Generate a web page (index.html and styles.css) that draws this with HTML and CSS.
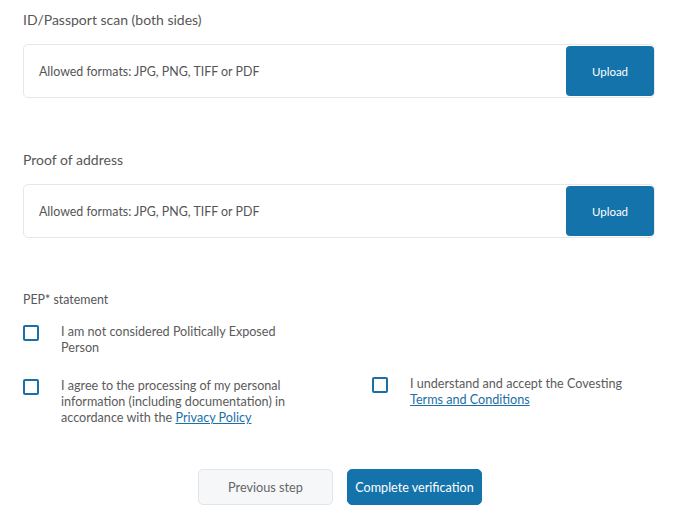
FILE: index.html
```html
<!DOCTYPE html>
<html>
<head>
<meta charset="utf-8">
<link rel="stylesheet" href="styles.css">
</head>
<body>
<div class="page">
  <section class="field">
    <div class="field-label">ID/Passport scan (both sides)</div>
    <div class="upload-box">
      <span class="hint">Allowed formats: JPG, PNG, TIFF or PDF</span>
      <button class="upload-btn">Upload</button>
    </div>
  </section>
  <section class="field field-second">
    <div class="field-label">Proof of address</div>
    <div class="upload-box">
      <span class="hint">Allowed formats: JPG, PNG, TIFF or PDF</span>
      <button class="upload-btn">Upload</button>
    </div>
  </section>
  <section class="pep">
    <div class="pep-title">PEP* statement</div>
    <div class="checks">
      <label class="check">
        <span class="box"></span>
        <span class="check-text">I am not considered Politically Exposed Person</span>
      </label>
      <div></div>
      <label class="check">
        <span class="box"></span>
        <span class="check-text">I agree to the processing of my personal information (including documentation) in accordance with the <a href="#">Privacy Policy</a></span>
      </label>
      <label class="check check-right">
        <span class="box"></span>
        <span class="check-text">I understand and accept the Covesting <a href="#">Terms and Conditions</a></span>
      </label>
    </div>
  </section>
  <div class="actions">
    <button class="btn btn-secondary">Previous step</button>
    <button class="btn btn-primary">Complete verification</button>
  </div>
</div>
</body>
</html>
```
FILE: styles.css
```css
* { box-sizing: border-box; }
html, body { margin: 0; padding: 0; background: #fff; }
body {
  font-family: Lato, "Open Sans", sans-serif;
  color: #575757;
}
.page {
  width: 632px;
  margin-left: 23px;
  padding-top: 12px;
}
.field-label {
  font-size: 14px;
  line-height: 16px;
  margin-bottom: 16px;
}
.field-second { margin-top: 54px; }
.upload-box {
  height: 54px;
  border: 1px solid #e7e7e7;
  border-radius: 5px;
  display: flex;
  align-items: center;
  justify-content: space-between;
  padding: 0 0 0 15px;
}
.hint { font-size: 12.4px; color: #555; }
.upload-btn {
  width: 88px;
  height: 50px;
  padding: 0;
  border: none;
  border-radius: 4px;
  background: #1473aa;
  color: #fff;
  font-family: inherit;
  font-size: 11.5px;
  font-weight: 400;
  cursor: pointer;
}
.pep { margin-top: 54px; }
.pep-title { font-size: 12.4px; line-height: 16px; margin-bottom: 16px; }
.checks {
  display: grid;
  grid-template-columns: 349px 1fr;
  row-gap: 22px;
}
.check {
  display: flex;
  align-items: flex-start;
  font-size: 12.6px;
  line-height: 16px;
}
.check-right { margin-top: -2px; }
.box {
  flex: none;
  width: 16px;
  height: 16px;
  border: 2px solid #1a6fa7;
  border-radius: 2px;
  margin-top: 1px;
  margin-right: 22px;
}
.check-text { max-width: 240px; color: #5b5b5b; }
.check-text a { color: #1a6fa7; text-decoration: underline; }
.actions {
  margin-top: 43px;
  padding-left: 2px;
  display: flex;
  justify-content: center;
  gap: 14px;
}
.btn {
  width: 135px;
  height: 36px;
  padding: 0;
  white-space: nowrap;
  border-radius: 5px;
  font-family: inherit;
  font-size: 12.7px;
  cursor: pointer;
}
.btn-secondary {
  background: #f6f7f9;
  border: 1px solid #e2e4e7;
  color: #666;
}
.btn-primary {
  background: #1473aa;
  border: 1px solid #1473aa;
  color: #fff;
  font-size: 12.6px;
  font-weight: 400;
}
```
